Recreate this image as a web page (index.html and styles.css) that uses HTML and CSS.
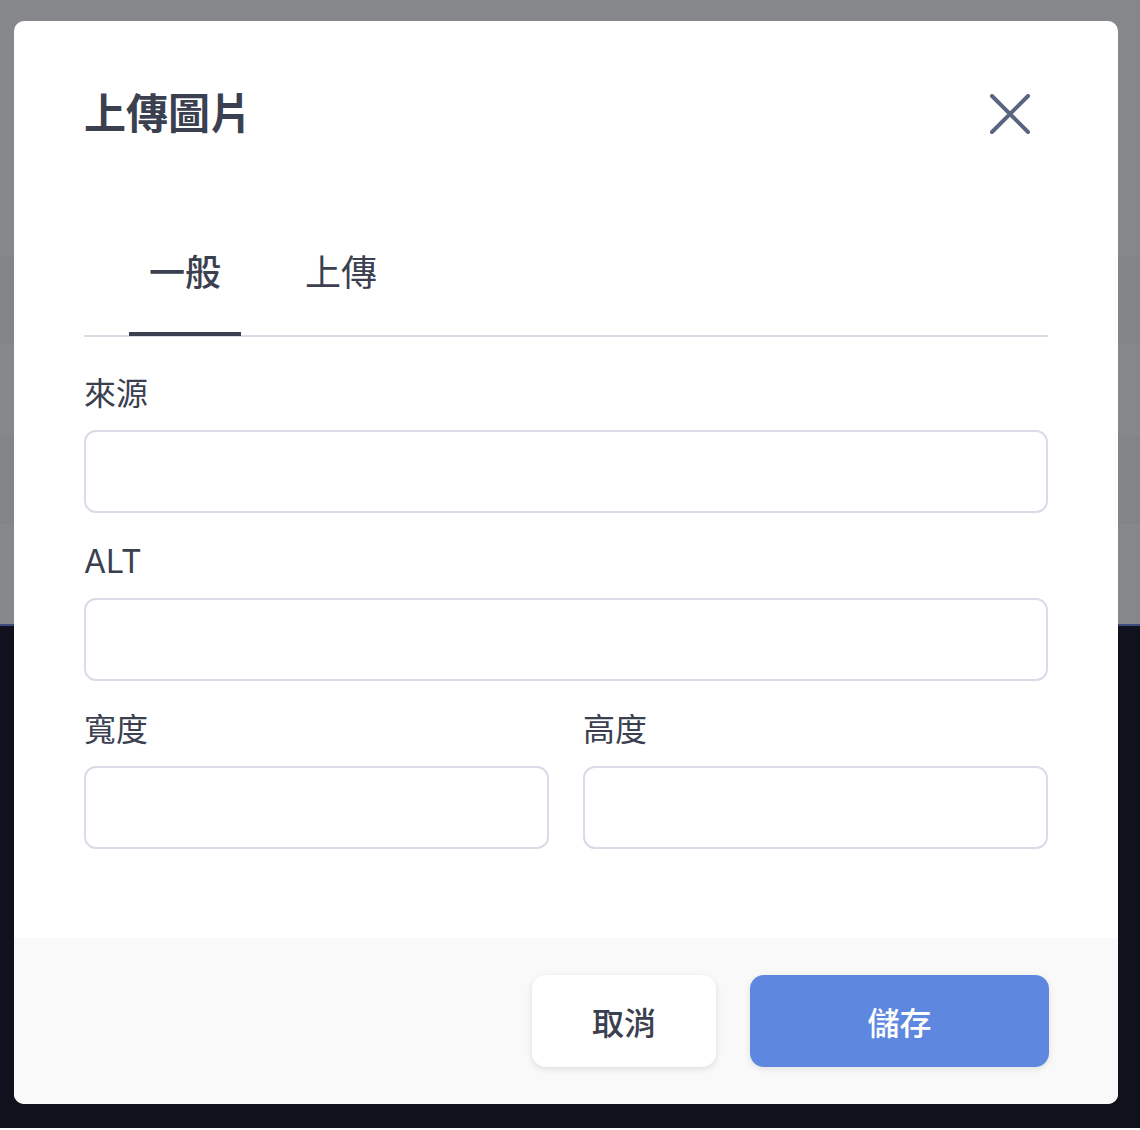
FILE: index.html
```html
<!DOCTYPE html>
<html lang="zh-Hant">
<head>
    <meta charset="UTF-8">
    <meta name="viewport" content="width=device-width, initial-scale=1.0">
    <title>上傳圖片</title>
    <link rel="stylesheet" href="styles.css">
</head>
<body>
    <!-- Page behind the dialog -->
    <div class="page">
        <div class="page-top">
            <div class="page-row"></div>
            <div class="page-row alt"></div>
            <div class="page-row"></div>
            <div class="page-row alt"></div>
            <div class="page-row"></div>
        </div>
        <div class="page-bottom"></div>
    </div>

    <div class="modal">
        <div class="modal-body">
            <div class="modal-header">
                <h1 class="modal-title">上傳圖片</h1>
                <button class="close-button" aria-label="close">
                    <svg width="40" height="40" viewBox="0 0 40 40" fill="none">
                        <path d="M2 2 L38 38 M38 2 L2 38" stroke="#5a6582" stroke-width="4" stroke-linecap="round"/>
                    </svg>
                </button>
            </div>

            <div class="tabs">
                <div class="tab active">一般</div>
                <div class="tab">上傳</div>
            </div>

            <div class="field">
                <label class="field-label">來源</label>
                <input class="field-input" type="text">
            </div>

            <div class="field">
                <label class="field-label">ALT</label>
                <input class="field-input" type="text">
            </div>

            <div class="field-row">
                <div class="field">
                    <label class="field-label">寬度</label>
                    <input class="field-input" type="text">
                </div>
                <div class="field">
                    <label class="field-label">高度</label>
                    <input class="field-input" type="text">
                </div>
            </div>
        </div>

        <div class="modal-footer">
            <button class="btn btn-cancel">取消</button>
            <button class="btn btn-save">儲存</button>
        </div>
    </div>
</body>
</html>
```

FILE: styles.css
```css
:root {
    --text-dark: #3a4050;
    --icon-slate: #5a6582;
    --input-border: #dadbe6;
    --tab-border: #d6dde5;
    --primary: #5e88df;
    --font-main: "Inter", "Noto Sans CJK TC", "Noto Sans", sans-serif;
}

* {
    margin: 0;
    padding: 0;
    box-sizing: border-box;
}

body {
    font-family: var(--font-main);
    color: var(--text-dark);
    width: 1140px;
    height: 1130px;
    overflow: hidden;
    position: relative;
}

/* Backdrop */
.page-top {
    height: 626px;
    background: #86878b;
    padding-top: 165px;
    border-bottom: 2px solid #3d4c7c;
}

.page-row {
    height: 90px;
    border-top: 1px solid rgba(255, 255, 255, 0.03);
}

.page-row.alt {
    background: rgba(0, 0, 0, 0.02);
}

.page-bottom {
    height: 502px;
    background: #0f121d;
}

/* Dialog */
.modal {
    position: absolute;
    top: 21px;
    left: 14px;
    width: 1104px;
    height: 1083px;
    background: #fff;
    border-radius: 10px;
    overflow: hidden;
    display: flex;
    flex-direction: column;
}

.modal-body {
    flex: 1;
    padding: 84px 70px 0;
}

.modal-header {
    display: flex;
    justify-content: space-between;
    align-items: center;
    height: 60px;
    margin-top: -21px;
}

.modal-title {
    font-size: 42px;
    font-weight: 600;
    line-height: 60px;
    color: var(--text-dark);
}

.close-button {
    background: none;
    border: none;
    width: 40px;
    height: 40px;
    margin-right: 18px;
    cursor: pointer;
}

/* Tabs */
.tabs {
    display: flex;
    gap: 44px;
    margin-top: 102px;
    padding-left: 45px;
    border-bottom: 2px solid var(--tab-border);
}

.tab {
    font-size: 36px;
    line-height: 54px;
    padding: 0 20px 32px;
    border-bottom: 4px solid transparent;
    margin-bottom: -1px;
    color: var(--text-dark);
    cursor: pointer;
}

.tab.active {
    font-weight: 500;
    border-bottom-color: var(--text-dark);
}

/* Form */
.field {
    margin-top: 33px;
    display: flex;
    flex-direction: column;
}

.field + .field,
.field-row {
    margin-top: 25px;
}

.field-row {
    display: grid;
    grid-template-columns: minmax(0, 1fr) minmax(0, 1fr);
    gap: 34px;
}

.field-row .field {
    margin-top: 0;
}

.field-label {
    font-size: 32px;
    line-height: 48px;
    margin-bottom: 12px;
    color: var(--text-dark);
}

.field-input {
    width: 100%;
    height: 83px;
    border: 2px solid var(--input-border);
    border-radius: 12px;
    background: #fff;
    font-family: var(--font-main);
    font-size: 28px;
    padding: 0 20px;
    outline: none;
}

/* Footer */
.modal-footer {
    height: 166px;
    background: #f9f9f9;
    display: flex;
    justify-content: flex-end;
    align-items: center;
    gap: 34px;
    padding: 0 69px;
}

.btn {
    height: 92px;
    border: none;
    border-radius: 14px;
    font-family: var(--font-main);
    font-size: 32px;
    font-weight: 500;
    cursor: pointer;
}

.btn-cancel {
    width: 184px;
    background: #fff;
    color: var(--text-dark);
    box-shadow: 0 2px 6px rgba(0, 0, 0, 0.12);
}

.btn-save {
    width: 299px;
    background: var(--primary);
    color: #fff;
    box-shadow: 0 2px 6px rgba(0, 0, 0, 0.1);
}
```
